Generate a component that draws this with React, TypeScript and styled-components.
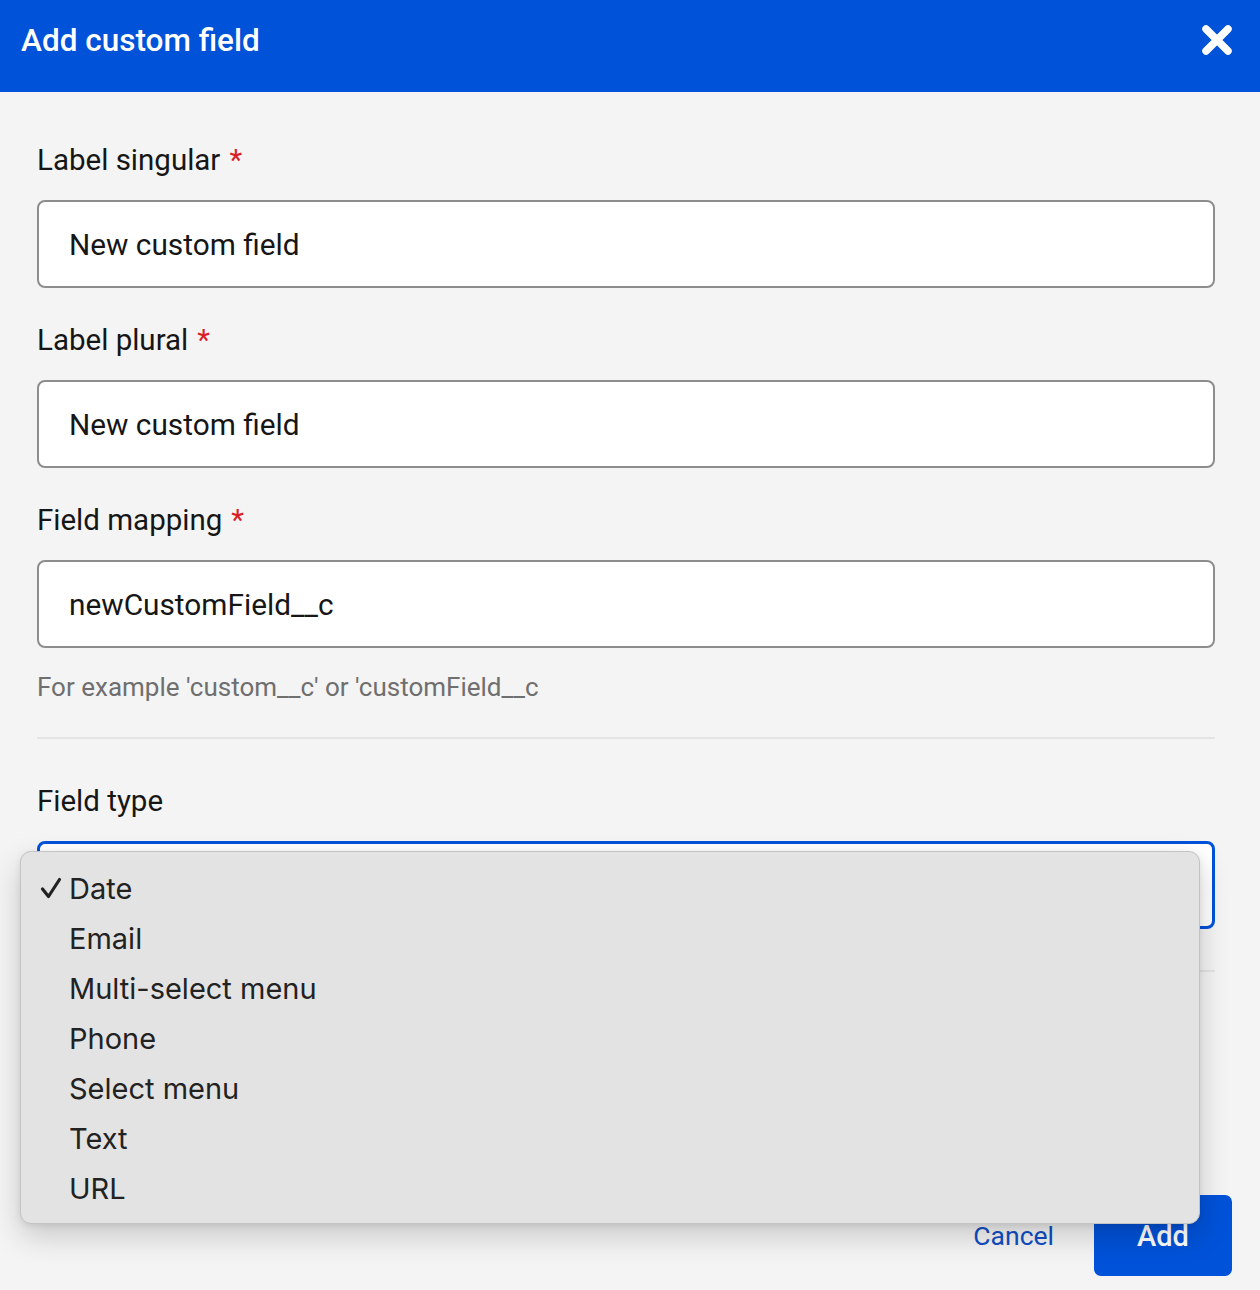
import React, { FC } from "react";
import styled, { createGlobalStyle } from "styled-components";

const blue = "#0052d9";

const GlobalStyle = createGlobalStyle`
  html, body {
    margin: 0;
    padding: 0;
    background: #f4f4f4;
  }
  body {
    font-family: Roboto, "Liberation Sans", sans-serif;
    color: #161616;
  }
`;

interface Field {
  label: string;
  value: string;
  required?: boolean;
  hint?: string;
}

const fields: Field[] = [
  { label: "Label singular", value: "New custom field", required: true },
  { label: "Label plural", value: "New custom field", required: true },
  {
    label: "Field mapping",
    value: "newCustomField__c",
    required: true,
    hint: "For example 'custom__c' or 'customField__c",
  },
];

const options = [
  "Date",
  "Email",
  "Multi-select menu",
  "Phone",
  "Select menu",
  "Text",
  "URL",
];

const CheckIcon: FC = () => (
  <svg width="22" height="24" viewBox="0 0 22 24">
    <path
      d="M2.5 13 L8.5 20.5 L19.5 3.5"
      fill="none"
      stroke="#222"
      strokeWidth="3.2"
      strokeLinecap="round"
      strokeLinejoin="round"
    />
  </svg>
);

const App: FC = () => {
  return (
    <Page>
      <GlobalStyle />
      <Header>
        <Title>Add custom field</Title>
        <CloseButton aria-label="Close">
          <svg width="34" height="34" viewBox="0 0 34 34">
            <path
              d="M6 6 L28 28 M28 6 L6 28"
              stroke="#fff"
              strokeWidth="7.5"
              strokeLinecap="round"
            />
          </svg>
        </CloseButton>
      </Header>
      <Body>
        {fields.map((f, idx) => (
          <Group key={idx}>
            <Label>
              {f.label}
              {f.required && <Star>*</Star>}
            </Label>
            <Input>{f.value}</Input>
            {f.hint && <Hint>{f.hint}</Hint>}
          </Group>
        ))}
        <Divider $top={34} />
        <Group $top={44}>
          <Label>Field type</Label>
          <SelectWrap>
            {/* the open menu covers the selected value */}
            <Select $focused />
            <Menu>
              {options.map((opt) => (
                <MenuItem key={opt}>
                  <Check>{opt === "Date" && <CheckIcon />}</Check>
                  <ItemText>{opt}</ItemText>
                </MenuItem>
              ))}
            </Menu>
          </SelectWrap>
        </Group>
        <Divider $top={41} />
      </Body>
      <Footer>
        <CancelButton>Cancel</CancelButton>
        <AddButton>Add</AddButton>
      </Footer>
    </Page>
  );
};

const Page = styled.div`
  width: 1260px;
  min-height: 1290px;
  background: #f4f4f4;
`;

const Header = styled.div`
  height: 92px;
  background: ${blue};
  display: flex;
  align-items: center;
  justify-content: space-between;
  padding: 0 26px 12px 21px;
  box-sizing: border-box;
`;

const Title = styled.h1`
  margin: 0;
  font-size: 31.5px;
  font-weight: 500;
  color: #fff;
  letter-spacing: 0;
`;

const CloseButton = styled.button`
  border: none;
  background: none;
  padding: 0;
  display: flex;
  cursor: pointer;
`;

const Body = styled.div`
  padding: 50px 45px 0 37px;
`;

const Group = styled.div<{ $top?: number }>`
  margin-top: ${(p) => (p.$top !== undefined ? p.$top : 0)}px;
  & + & {
    margin-top: 34px;
  }
`;

const Label = styled.div`
  font-size: 29.5px;
  line-height: 36px;
  color: #161616;
  margin-bottom: 22px;
`;

const Star = styled.span`
  color: #da1e28;
  margin-left: 9px;
`;

const Input = styled.div`
  height: 88px;
  box-sizing: border-box;
  background: #fff;
  border: 2px solid #8d8d8d;
  border-radius: 8px;
  display: flex;
  align-items: center;
  padding-left: 30px;
  font-size: 29.8px;
  color: #161616;
`;

const Hint = styled.div`
  margin-top: 23px;
  font-size: 26px;
  line-height: 32px;
  color: #6f6f6f;
`;

const Divider = styled.hr<{ $top: number }>`
  margin: ${(p) => p.$top}px 0 0;
  border: none;
  border-top: 2px solid #e4e4e4;
`;

const SelectWrap = styled.div`
  position: relative;
`;

const Select = styled(Input)<{ $focused?: boolean }>`
  border: 3px solid ${(p) => (p.$focused ? blue : "#8d8d8d")};
`;

const Menu = styled.div`
  position: absolute;
  left: -17px;
  top: 10px;
  width: 1180px;
  box-sizing: border-box;
  padding: 11px 0 10px;
  background: #e3e3e3;
  border: 1px solid #c4c4c4;
  border-radius: 11px;
  box-shadow: 0 12px 30px rgba(0, 0, 0, 0.18), 0 2px 6px rgba(0, 0, 0, 0.08);
  font-family: Inter, "Noto Sans", sans-serif;
  z-index: 2;
`;

const MenuItem = styled.div`
  height: 50px;
  display: flex;
  align-items: center;
  font-size: 29px;
  color: #222;
`;

const Check = styled.span`
  width: 48px;
  flex: none;
  box-sizing: border-box;
  padding-left: 19px;
  display: flex;
  align-items: center;
`;

const ItemText = styled.span`
  flex: none;
`;

const Footer = styled.div`
  display: flex;
  justify-content: flex-end;
  align-items: center;
  gap: 40px;
  padding: 223px 28px 0 0;
`;

const CancelButton = styled.button`
  border: none;
  background: none;
  padding: 0;
  font-family: Roboto, "Liberation Sans", sans-serif;
  font-size: 26.5px;
  color: #0f4fc4;
  cursor: pointer;
`;

const AddButton = styled.button`
  width: 138px;
  height: 81px;
  border: none;
  border-radius: 7px;
  background: ${blue};
  color: #fff;
  font-family: Roboto, "Liberation Sans", sans-serif;
  font-size: 29px;
  font-weight: 500;
  cursor: pointer;
`;

export default App;
